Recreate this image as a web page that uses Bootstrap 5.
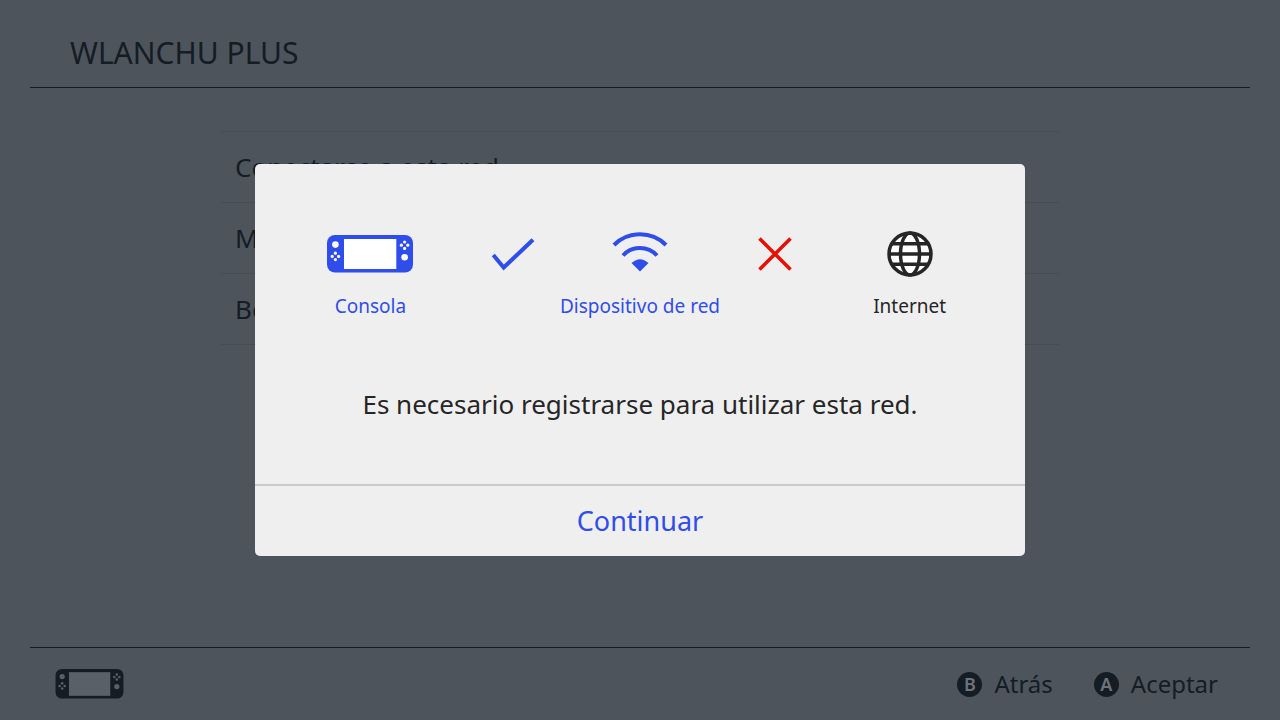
<!DOCTYPE html>
<html lang="es">
<head>
<meta charset="utf-8">
<meta name="viewport" content="width=device-width, initial-scale=1">
<title>WLANCHU PLUS</title>
<link href="https://cdn.jsdelivr.net/npm/bootstrap@5.3.0/dist/css/bootstrap.min.css" rel="stylesheet">
<style>
  :root { --screen: #4d545c; --ink: #141c24; --rule: #454c54; --accent: #2f4deb; --panel: #efefef; }
  body { background: var(--screen); color: var(--ink); font-family: "Noto Sans", "Open Sans", sans-serif; }
  .page-frame { padding: 0 30px; }
  .page-title { font-size: 30px; line-height: 40px; font-weight: 400; }
  .top-bar { border-bottom: 1px solid var(--ink); padding: 33px 40px 14px; }
  .bottom-bar { border-top: 1px solid var(--ink); padding: 0 32px 0 25px; height: 73px; }
  .options { max-width: 838px; margin-top: 43px; }
  .options .list-group-item { height: 71px; padding: 0 14px; background: transparent; color: var(--ink); border-color: var(--rule); font-size: 26px; }
  .options .list-group-item:first-child { border-top-width: 1px; height: 72px; }
  .options .list-group-item:last-child { border-bottom-width: 1px; }
  .hint { color: var(--ink); font-size: 24px; line-height: 32px; gap: 12px; }
  .hints { gap: 41px; }
  .key { width: 25px; height: 25px; background: var(--ink); color: #6c737a; font-size: 18px; line-height: 25px; font-weight: 600; }
  .device { fill: currentColor; --hole: #fff; }
  .hole { fill: var(--hole); }
  .bottom-bar .device { --hole: #596068; }
  .modal-dialog { max-width: 770px; }
  .modal-content { background: var(--panel); border: 0; border-radius: 5px; color: #262626; }
  .modal-body { padding: 66px 48px 62px; }
  .route { display: grid; grid-template-columns: repeat(5, minmax(0, 1fr)); }
  .route-label { font-size: 19px; line-height: 24px; margin-top: 16px; white-space: nowrap; }
  .accent { color: var(--accent); }
  .notice { font-size: 26px; line-height: 36px; margin-top: 68px; }
  .modal-footer { border-top: 2px solid #cacaca; }
  .confirm { height: 70px; padding: 0; font-size: 27px; line-height: 36px; color: var(--accent); border: 0; }
</style>
</head>
<body>
<svg class="position-absolute" width="0" height="0" aria-hidden="true">
  <symbol id="device" viewBox="0 0 86 38">
    <rect width="86" height="37.5" rx="8"/>
    <g class="hole">
      <rect x="17" y="4" width="52.3" height="30"/>
      <circle cx="8.4" cy="9.6" r="3.3"/>
      <circle cx="77.6" cy="22.3" r="3.3"/>
      <circle cx="8.4" cy="18.2" r="1.6"/><circle cx="8.4" cy="24.6" r="1.6"/><circle cx="5.2" cy="21.4" r="1.6"/><circle cx="11.6" cy="21.4" r="1.6"/>
      <circle cx="77.6" cy="7" r="1.6"/><circle cx="77.6" cy="13.4" r="1.6"/><circle cx="74.4" cy="10.2" r="1.6"/><circle cx="80.8" cy="10.2" r="1.6"/>
    </g>
  </symbol>
</svg>

<div class="page-frame d-flex flex-column min-vh-100">
  <header class="top-bar"><h1 class="page-title m-0">WLANCHU PLUS</h1></header>
  <main class="flex-grow-1">
    <div class="options list-group list-group-flush mx-auto">
      <button type="button" class="list-group-item list-group-item-action">Conectarse a esta red</button>
      <button type="button" class="list-group-item list-group-item-action">Modificar</button>
      <button type="button" class="list-group-item list-group-item-action">Borrar</button>
    </div>
  </main>
  <footer class="bottom-bar d-flex justify-content-between align-items-center">
    <svg class="device" width="69" height="30" role="img" aria-label="Consola"><use href="#device"/></svg>
    <div class="hints d-flex">
      <button type="button" class="hint btn p-0 border-0 d-flex align-items-center"><span class="key rounded-circle">B</span>Atrás</button>
      <button type="button" class="hint btn p-0 border-0 d-flex align-items-center"><span class="key rounded-circle">A</span>Aceptar</button>
    </div>
  </footer>
</div>

<div class="modal show d-block" tabindex="-1" role="dialog" aria-modal="true" aria-labelledby="notice">
  <div class="modal-dialog modal-dialog-centered">
    <div class="modal-content">
      <div class="modal-body text-center">
        <div class="route">
          <div class="accent d-flex flex-column align-items-center">
            <svg class="device" width="86" height="48" viewBox="0 0 86 48"><use href="#device" y="5" width="86" height="38"/></svg>
            <span class="route-label">Consola</span>
          </div>
          <div class="accent d-flex flex-column align-items-center">
            <svg width="64" height="48" viewBox="0 0 64 48" fill="none" stroke="currentColor" stroke-width="4"><path d="M20.3 25 30.7 37.5 60 9.7"/></svg>
          </div>
          <div class="accent d-flex flex-column align-items-center">
            <svg width="56" height="48" viewBox="0 0 56 48" fill="none" stroke="currentColor" stroke-width="4"><path d="M2 15A37 37 0 0 1 54 15M11 25.500A23 23 0 0 1 45 25.500"/><path d="M19.500 33Q28 25.400 36.500 33L28 41.500Z" fill="currentColor" stroke="none"/></svg>
            <span class="route-label">Dispositivo de red</span>
          </div>
          <div class="d-flex flex-column align-items-center">
            <svg width="48" height="48" viewBox="0 0 48 48" fill="none" stroke="#e60f00" stroke-width="3.600"><path d="M8.500 8.500 39.500 39.500M39.500 8.500 8.500 39.500"/></svg>
          </div>
          <div class="d-flex flex-column align-items-center">
            <svg width="48" height="48" viewBox="0 0 48 48" fill="none" stroke="currentColor" stroke-width="3.500"><circle cx="24" cy="24" r="21" fill="#fff"/><ellipse cx="24" cy="24" rx="9.500" ry="21"/><path d="M6 13.700H42M3 24H45M6 34.300H42"/></svg>
            <span class="route-label">Internet</span>
          </div>
        </div>
        <p class="notice mb-0" id="notice">Es necesario registrarse para utilizar esta red.</p>
      </div>
      <div class="modal-footer p-0">
        <button type="button" class="confirm btn w-100 m-0 rounded-0">Continuar</button>
      </div>
    </div>
  </div>
</div>
<script src="https://cdn.jsdelivr.net/npm/bootstrap@5.3.0/dist/js/bootstrap.bundle.min.js"></script>
</body>
</html>
